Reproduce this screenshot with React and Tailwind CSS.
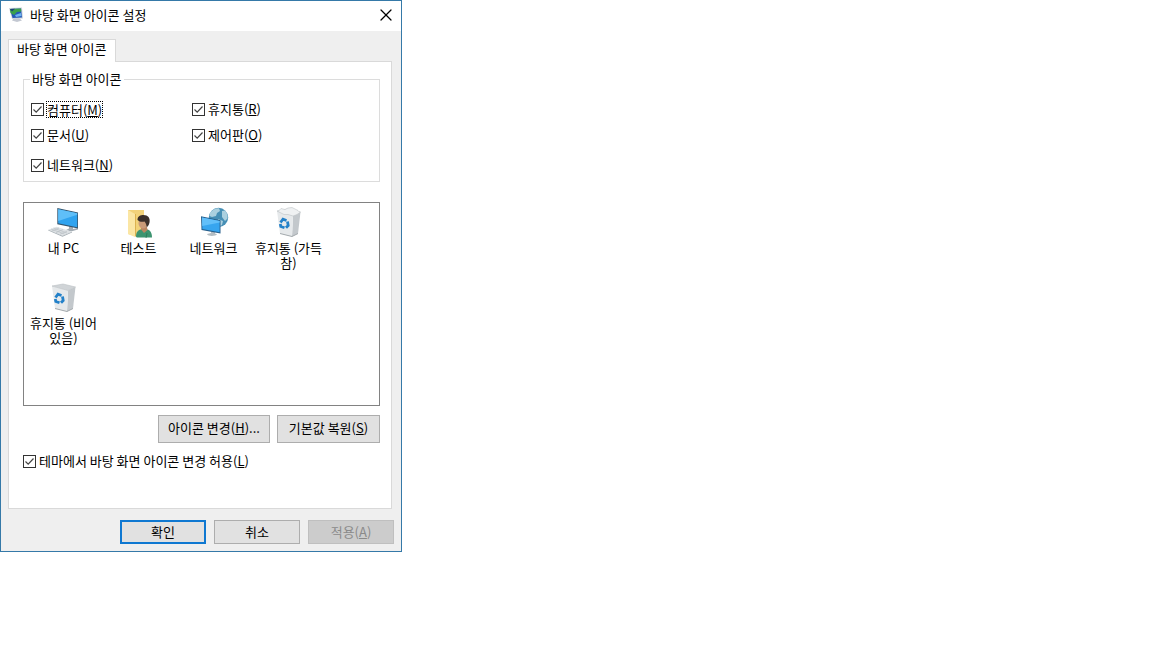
import React, { useState } from 'react';
import { X } from 'lucide-react';

const PcIcon = () => (
  <svg width="32" height="32" viewBox="0 0 32 32" aria-hidden="true">
    <path d="M21 18l4 1v3l5-1v1.500l-7 2-5-1.500 3-1.500z" fill="#a3acb3" />
    <path d="M9.300 1L30 5.400V21.500L9.300 17.300z" fill="#35556d" />
    <path d="M10.200 2.200L29.200 6.200v14L10.200 16.300z" fill="#2fa3ef" />
    <path d="M10.200 2.200L29.200 6.200v1.500L10.200 14z" fill="#5fbff8" />
    <path d="M.3 22.700l8.400-3 15.300 5-9.500 4z" fill="#dde1e4" />
    <path d="M.3 22.700l14.200 6L24 24.700v.8l-9.500 4.200L.3 23.600z" fill="#a4adb3" />
    <path d="M3 22l13.500 5M5.500 21l13.500 5M4 24l7-3M8 25.600l7-3M12 27.200l7-3" stroke="#b5bcc1" strokeWidth=".6" />
  </svg>
);

const UserIcon = () => (
  <svg width="32" height="32" viewBox="0 0 32 32" aria-hidden="true">
    <path d="M5 3h16v24l-9 2-7-2z" fill="#f2d27a" />
    <path d="M5 3l7 4v23l-7-3z" fill="#fbe6a4" />
    <path d="M12 7h1v22l-1 1z" fill="#dcb250" />
    <path d="M13 29.500c0-5 2.500-7.500 8-7.500s8 2.500 8 8.500H15c-1.400 0-2-.5-2-1z" fill="#3d9470" />
    <path d="M18 20h6l.5 3-3.500 3-3-3.500z" fill="#b98560" />
    <ellipse cx="20" cy="16" rx="4.500" ry="5.500" fill="#c99a78" />
    <path d="M14.500 13c0-4 3-5 6-5 4.500 0 7 3 6 7.500-.4 2.500-2 4.500-3 4.500 0-3-1-4-2-5.500-2 .5-5 .5-7-1.500z" fill="#3b302b" />
    <path d="M24 26l-1 5" stroke="#2a7757" strokeWidth=".8" />
  </svg>
);

const NetworkIcon = () => (
  <svg width="32" height="32" viewBox="0 0 32 32" aria-hidden="true">
    <circle cx="20.500" cy="10.500" r="9.700" fill="#468fb5" />
    <path d="M12 5.500c3-3 6-4.500 9-4.300l1 2.800-3 2-1 3-4 1-2.500-1zM24 4l3-.5c2 2 3 5 2.500 8L27 14l-3-4zM20 12l5 2-1 4-2 1z" fill="#abd0df" />
    <path d="M9 27l4-1v-2l4 1v1.500l2 .8c-1 2-9 2.500-10-.3z" fill="#b4bdc3" />
    <path d="M3 9.300l19.500 4v13.200L3.500 23z" fill="#275f8c" />
    <path d="M4 10.500l17.600 3.600v11.200L4.400 22z" fill="#37a5ef" />
    <path d="M4 10.500l17.600 3.600v1.500L4.200 19z" fill="#62bff9" />
  </svg>
);

const BinIcon = ({ full }) => (
  <svg width="32" height="32" viewBox="0 0 32 32" aria-hidden="true">
    <path d="M20 8.500L27.500 5l-2.500 21.500-6 3z" fill="#c3c8cc" />
    <path d="M4 4l16 4.500L19 29.500 7 26.500z" fill="#e6e9eb" />
    <path d="M4 4l11-2 12.500 3L20 8.500z" fill={full ? '#f4f5f6' : '#d0d4d7'} stroke="#bcc1c5" strokeWidth=".6" />
    {full && (
      <path d="M5 4.500l3-3 4 1 3-1.500 4-.5 3 1.500 3 1.500 2 2-3 2-4 1.500-5-1.500-4 0z" fill="#eff1f2" stroke="#bfc4c7" strokeWidth=".6" />
    )}
    <path d="M7 26.500l12 3 6-3" fill="none" stroke="#a3a9ad" />
    <g fill="none" stroke="#2381c9" strokeWidth="2.800">
      <path d="M7.500 15.500l2.500-3.300 3.500 1.300" />
      <path d="M14.500 14.500l.7 4-2.200 2.300" />
      <path d="M11.500 20.800l-3.700-1.300L7.300 17" />
    </g>
  </svg>
);

const TitleIcon = () => (
  <svg width="16" height="16" viewBox="0 0 16 16" aria-hidden="true">
    <path d="M6 11h5l3 2.500-5 1.500-5-1.500z" fill="#c3c8d2" />
    <path d="M1 1l13-.5 1 11-11 .5z" fill="#cdd3db" />
    <path d="M2 2l11-.6 1 9-9.500.6z" fill="#2459b8" />
    <path d="M2 2l11-.6.3 3L9 5 6 8 2.500 6z" fill="#3aa04a" />
    <path d="M7 8l6-2 .5 3L8 10z" fill="#6fb3ee" />
    <path d="M2 2l5-.3L4 4.500z" fill="#1c3f7c" />
  </svg>
);

const Shortcut = ({ text, keyName, after = '' }) => (
  <>{text}(<span className="underline underline-offset-1">{keyName}</span>){after}</>
);

const Check = ({ text, keyName, focused }) => {
  const [checked, setChecked] = useState(true);

  return (
    <label className="flex min-h-[18px] items-center gap-[3px]">
      <span className="grid shrink-0">
        <input
          type="checkbox"
          checked={checked}
          onChange={(e) => setChecked(e.target.checked)}
          className="col-start-1 row-start-1 size-[13px] appearance-none border border-[#333333] bg-white outline-none"
        />
        {checked && (
          <svg className="pointer-events-none col-start-1 row-start-1" width="13" height="13" viewBox="0 0 13 13" aria-hidden="true">
            <path d="M2.500 6.500l2.700 2.700 5.300-5.700" fill="none" stroke="#444444" strokeWidth="1.200" />
          </svg>
        )}
      </span>
      <span className={focused ? 'whitespace-nowrap leading-[15px] outline-1 outline-dotted outline-black' : 'whitespace-nowrap leading-4'}>
        <Shortcut text={text} keyName={keyName} />
      </span>
    </label>
  );
};

const icons = [
  { label: '내 PC', icon: <PcIcon /> },
  { label: '테스트', icon: <UserIcon /> },
  { label: '네트워크', icon: <NetworkIcon /> },
  { label: '휴지통 (가득 참)', icon: <BinIcon full /> },
  { label: '휴지통 (비어 있음)', icon: <BinIcon /> },
];

const App = () => {
  return (
    <div className="min-h-screen bg-white text-[13px] leading-[18px] text-black font-['Noto_Sans_CJK_KR',sans-serif]">
      <div role="dialog" aria-labelledby="dialog-title" className="w-full max-w-[402px] border border-[#3579a8] bg-[#efefef]">
        <header className="flex h-[30px] items-center gap-1.5 bg-white pb-0.5 pl-[7px] pr-[5px]">
          <TitleIcon />
          <h1 id="dialog-title" className="grow">바탕 화면 아이콘 설정</h1>
          <button aria-label="닫기">
            <X size={20} strokeWidth={1.5} />
          </button>
        </header>

        <main className="px-[7px] pt-2 pb-[7px]">
          <div role="tablist" className="flex">
            <button
              role="tab"
              aria-selected="true"
              className="-mb-px border border-b-0 border-[#d9d9d9] bg-white px-2 pb-1"
            >
              바탕 화면 아이콘
            </button>
          </div>

          <section role="tabpanel" className="mr-0.5 border border-[#d9d9d9] bg-white pt-2 pr-[11px] pb-[38px] pl-3.5">
            <fieldset className="border border-[#dcdcdc] px-1.5 pb-[7px]">
              <legend className="px-0.5">바탕 화면 아이콘</legend>
              <div className="grid grid-cols-[161px_1fr] gap-y-2 px-px pt-3">
                <Check text="컴퓨터" keyName="M" focused />
                <Check text="휴지통" keyName="R" />
                <Check text="문서" keyName="U" />
                <Check text="제어판" keyName="O" />
                <div className="pt-1">
                  <Check text="네트워크" keyName="N" />
                </div>
              </div>
            </fieldset>

            <ul className="mt-5 flex min-h-[204px] flex-wrap content-start border border-[#828282] pt-1 pl-0.5">
              {icons.map((item) => (
                <li key={item.label} className="w-[75px]">
                  <button className="flex min-h-[75px] w-full flex-col items-center gap-px text-center leading-[15px]">
                    {item.icon}
                    <span>{item.label}</span>
                  </button>
                </li>
              ))}
            </ul>

            <div className="mt-[9px] flex justify-end gap-[7px]">
              <button className="h-7 w-28 border border-[#adadad] bg-[#e1e1e1] pb-0.5">
                <Shortcut text="아이콘 변경" keyName="H" after="..." />
              </button>
              <button className="h-7 w-[103px] border border-[#adadad] bg-[#e1e1e1] pb-0.5">
                <Shortcut text="기본값 복원" keyName="S" />
              </button>
            </div>

            <div className="mt-[9px]">
              <Check text="테마에서 바탕 화면 아이콘 변경 허용" keyName="L" />
            </div>
          </section>

          <footer className="mt-[11px] flex justify-end gap-2">
            <button className="h-6 w-[86px] border-2 border-[#0f78d1] bg-[#e1e1e1] leading-4">확인</button>
            <button className="h-6 w-[86px] border border-[#adadad] bg-[#e1e1e1]">취소</button>
            <button disabled className="h-6 w-[86px] border border-[#bfbfbf] bg-[#cccccc] text-[#8a8a8a]">
              <Shortcut text="적용" keyName="A" />
            </button>
          </footer>
        </main>
      </div>
    </div>
  );
};

export default App;
